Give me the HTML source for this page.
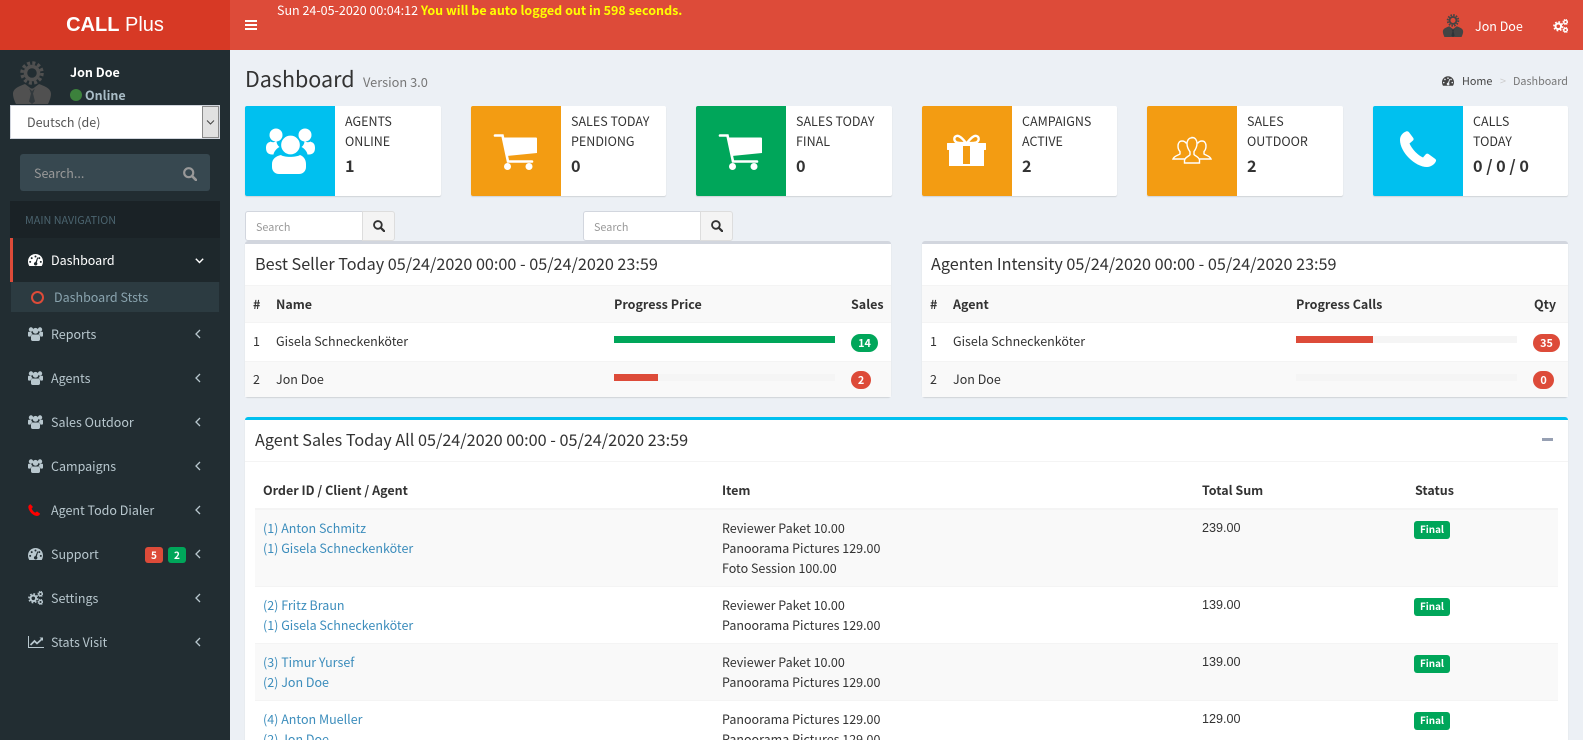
<!DOCTYPE html>
<html lang="en">
<head>
<meta charset="utf-8">
<title>CALL Plus | Dashboard</title>
<style>
*{box-sizing:border-box}
html,body{margin:0;padding:0;width:1583px;height:740px;overflow:hidden}
body{background:#ecf0f5}
#w{position:relative;width:1583px;height:740px;overflow:hidden;background:#ecf0f5;color:#333;font:12.5px/20px "Noto Sans CJK JP","Liberation Sans",sans-serif}
.a,.t{position:absolute}
.t{white-space:nowrap;line-height:20px}
svg{position:absolute;display:block;overflow:visible}
.nav{color:#b8c7ce}
.arabic{font-family:"Liberation Sans",sans-serif;font-size:12.6px}
.b{font-weight:700}
.box{position:absolute;background:#fff;border-radius:3px;box-shadow:0 1px 1px rgba(0,0,0,.12)}
.ib{position:absolute;top:106px;height:90px;background:#fff;border-radius:2px;box-shadow:0 1px 1px rgba(0,0,0,.12)}
.ic{position:absolute;left:0;top:0;width:90px;height:90px;border-radius:2px 0 0 2px}
.cy{background:#00c0ef}.or{background:#f39c12}.gr{background:#00a65a}.rd{background:#dd4b39}
.ib .t{left:100px;color:#333}
.ib .l1{top:5px}.ib .l2{top:25px}.ib .n{top:49px;font-size:16.2px;font-weight:700}
.inp{position:absolute;top:211px;height:30px;background:#fff;border:1px solid #d2d6de;border-radius:3px 0 0 3px;width:118px;font-size:10.8px;color:#999;padding:5px 10px 0;line-height:20px}
.btn{position:absolute;top:211px;height:30px;width:33px;background:#f4f4f4;border:1px solid #ddd;border-left:1px solid #ddd;border-radius:0 3px 3px 0}
.badge{position:absolute;color:#fff;font-size:10.8px;font-weight:700;line-height:18px;text-align:center;height:18px;border-radius:9px}
.final{position:absolute;left:1414px;width:36px;height:18px;background:#00a65a;color:#fff;font-size:9.9px;font-weight:700;line-height:16px;text-align:center;border-radius:3px}
.lk{color:#3c8dbc}
.track{position:absolute;height:7px;background:#f5f5f5}
.fill{position:absolute;left:0;top:0;height:7px}
.h3{font-size:16.2px}
</style>
</head>
<body>
<div id="w">
<svg width="0" height="0" style="position:absolute">
  <defs>
    <symbol id="users" viewBox="0 0 15 14">
      <circle cx="3" cy="2.500" r="2.200" fill="currentColor"/><circle cx="12" cy="2.500" r="2.200" fill="currentColor"/><circle cx="7.500" cy="3.800" r="2.900" fill="currentColor"/>
      <path fill="currentColor" d="M0 5.600c0-.6.5-.9 1-.9h2.200c.2 1 .7 1.800 1.400 2.400C3.400 7.500 2.700 8.400 2.600 9.600H1C.4 9.600 0 9.200 0 8.600zM15 5.600c0-.6-.5-.9-1-.9h-2.200c-.2 1-.7 1.800-1.400 2.400 1.200.4 1.900 1.300 2 2.500H14c.6 0 1-.4 1-1zM4.600 7.500h5.800c1.200 0 1.600 1.100 1.600 2.300v2.400c0 1-.6 1.800-1.700 1.800H4.700C3.600 14 3 13.200 3 12.200V9.800c0-1.200.4-2.300 1.600-2.300z"/>
    </symbol>
    <symbol id="gauge" viewBox="0 0 15 12">
      <path fill="currentColor" fill-rule="evenodd" d="M7.500 0C3.300 0 0 3.300 0 7.500c0 1.700.5 3.200 1.300 4.500h12.400c.8-1.300 1.300-2.800 1.300-4.500C15 3.300 11.700 0 7.500 0zM7.500 1.500a1 1 0 1 1 0 2 1 1 0 0 1 0-2zM3.700 3.100a1 1 0 1 1 0 2 1 1 0 0 1 0-2zM11.300 3.100a1 1 0 1 1 0 2 1 1 0 0 1 0-2zM2.200 6.900a1 1 0 1 1 0 2 1 1 0 0 1 0-2zM12.800 6.900a1 1 0 1 1 0 2 1 1 0 0 1 0-2zM9.300 3.400l.9.300-1.400 4.800c.4.300.6.800.6 1.300 0 1-.8 1.700-1.700 1.700S5.900 10.800 5.900 9.800c0-.9.700-1.600 1.600-1.700z"/>
    </symbol>
    <symbol id="cogs" viewBox="0 0 15 14">
      <g fill="none" stroke="currentColor">
        <circle cx="5.300" cy="7.300" r="2.800" stroke-width="2"/>
        <circle cx="5.300" cy="7.300" r="4.400" stroke-width="1.500" stroke-dasharray="1.700 1.750"/>
        <circle cx="12.500" cy="3" r="1.700" stroke-width="1.300"/>
        <circle cx="12.500" cy="3" r="2.600" stroke-width=".9" stroke-dasharray="1.100 .95"/>
        <circle cx="12.500" cy="11" r="1.700" stroke-width="1.300"/>
        <circle cx="12.500" cy="11" r="2.600" stroke-width=".9" stroke-dasharray="1.100 .95"/>
      </g>
    </symbol>
    <symbol id="search" viewBox="0 0 13 13">
      <circle cx="5.300" cy="5.300" r="4.200" fill="none" stroke="currentColor" stroke-width="2"/>
      <path d="M8.400 8.400L12 12" stroke="currentColor" stroke-width="2.400" stroke-linecap="round"/>
    </symbol>
    <symbol id="man" viewBox="0 0 40 43">
      <g fill="none" stroke="currentColor">
        <circle cx="20" cy="12" r="6.500" stroke-width="3.500"/>
        <circle cx="20" cy="12" r="10" stroke-width="3.500" stroke-dasharray="3 2.236"/>
      </g>
      <path fill="currentColor" d="M13 23C8 25 1 27 1 33c0 3 1.500 7 3 10h32c1.500-3 3-7 3-10 0-6-7-8-12-10l-6 4.500h-2z"/>
      <path fill="#222d32" d="M17.200 27.500l2.800 2.600 2.800-2.600-1.800 5 2 8-3 2.500-3-2.500 2-8z" opacity=".65"/>
    </symbol>
  </defs>
</svg>

<!-- HEADER -->
<div class="a" style="left:0;top:0;width:230px;height:50px;background:#d73925"></div>
<div class="t" style="left:0;top:10px;width:230px;text-align:center;font:20px/30px 'Liberation Sans',sans-serif;color:#fff"><b>CALL</b> Plus</div>
<div class="a" style="left:230px;top:0;width:1353px;height:50px;background:#dd4b39"></div>
<div class="a" style="left:245px;top:20px;width:12px;height:2px;background:#fff"></div>
<div class="a" style="left:245px;top:24px;width:12px;height:2px;background:#fff"></div>
<div class="a" style="left:245px;top:28px;width:12px;height:2px;background:#fff"></div>
<div class="t" style="left:277px;top:0;color:#fff">Sun 24-05-2020 00:04:12 <b style="color:#ff0">You will be auto logged out in 598 seconds.</b></div>
<svg style="left:1442px;top:14px;color:#444" width="22" height="23"><use href="#man"/></svg>
<div class="t" style="left:1475px;top:16px;color:#fff">Jon Doe</div>
<svg style="left:1553px;top:19px;color:#fff" width="15" height="14"><use href="#cogs"/></svg>

<!-- SIDEBAR -->
<div class="a" style="left:0;top:50px;width:230px;height:690px;background:#222d32"></div>
<svg style="left:12px;top:61px;color:#505050" width="40" height="43"><use href="#man"/></svg>
<div class="t b" style="left:70px;top:62px;color:#fff">Jon Doe</div>
<div class="a" style="left:70px;top:89px;width:12px;height:12px;border-radius:50%;background:#3c813c"></div>
<div class="t" style="left:85px;top:85px;color:#a9bcc6;font-weight:700">Online</div>
<div class="a" style="left:10px;top:105px;width:210px;height:34px;background:#fff;border:1px solid #d2d6de"></div>
<div class="t" style="left:27px;top:112px;color:#555">Deutsch (de)</div>
<div class="a" style="left:202px;top:106px;width:17px;height:32px;background:#e1e1e1;border:1px solid #8a8a8a"></div>
<svg style="left:206px;top:120px" width="9" height="5"><path d="M1 .5l3.500 3.500L8 .5" fill="none" stroke="#444" stroke-width="1"/></svg>

<div class="a" style="left:20px;top:154px;width:190px;height:37px;background:#374850;border-radius:3px"></div>
<div class="t" style="left:34px;top:163px;color:#999">Search...</div>
<svg style="left:183px;top:167px;color:#999" width="14" height="14"><use href="#search"/></svg>

<div class="a" style="left:10px;top:201px;width:210px;height:37px;background:#1a2226"></div>
<div class="t" style="left:25px;top:210px;font-size:10.8px;color:#4b646f">MAIN NAVIGATION</div>

<div class="a" style="left:10px;top:238px;width:210px;height:44px;background:#1e282c;border-left:3px solid #dd4b39"></div>
<svg style="left:28px;top:254px;color:#fff" width="15" height="12"><use href="#gauge"/></svg>
<div class="t" style="left:51px;top:250px;color:#fff">Dashboard</div>
<svg style="left:195px;top:258px" width="9" height="6"><path d="M.8.800l3.700 3.700L8.200.800" fill="none" stroke="#fff" stroke-width="1.400"/></svg>

<div class="a" style="left:11px;top:282px;width:208px;height:30px;background:#2c3b41"></div>
<div class="a" style="left:31px;top:291px;width:13px;height:13px;border:2px solid #dd4b39;border-radius:50%"></div>
<div class="t" style="left:54px;top:287px;color:#8aa4af">Dashboard Ststs</div>

<svg style="left:28px;top:327px;color:#b8c7ce" width="15" height="14"><use href="#users"/></svg>
<div class="t nav" style="left:51px;top:324px">Reports</div>
<svg style="left:28px;top:371px;color:#b8c7ce" width="15" height="14"><use href="#users"/></svg>
<div class="t nav" style="left:51px;top:368px">Agents</div>
<svg style="left:28px;top:415px;color:#b8c7ce" width="15" height="14"><use href="#users"/></svg>
<div class="t nav" style="left:51px;top:412px">Sales Outdoor</div>
<svg style="left:28px;top:459px;color:#b8c7ce" width="15" height="14"><use href="#users"/></svg>
<div class="t nav" style="left:51px;top:456px">Campaigns</div>
<svg style="left:28px;top:504px" width="12" height="12" viewBox="0 0 36 36"><path fill="#f00" d="M8 1C5 1 1 4 1 9c0 11 14 27 26 27 5 0 9-4 9-7l-9-7-5 4c-5-2-10-8-11-13l4-4z"/></svg>
<div class="t nav" style="left:51px;top:500px">Agent Todo Dialer</div>
<svg style="left:28px;top:548px;color:#b8c7ce" width="15" height="12"><use href="#gauge"/></svg>
<div class="t nav" style="left:51px;top:544px">Support</div>
<div class="a rd" style="left:145px;top:547px;width:18px;height:16px;border-radius:3px;color:#fff;font:700 10px/16px 'Noto Sans CJK JP',sans-serif;text-align:center">5</div>
<div class="a gr" style="left:168px;top:547px;width:18px;height:16px;border-radius:3px;color:#fff;font:700 10px/16px 'Noto Sans CJK JP',sans-serif;text-align:center">2</div>
<svg style="left:28px;top:591px;color:#b8c7ce" width="15" height="14"><use href="#cogs"/></svg>
<div class="t nav" style="left:51px;top:588px">Settings</div>
<svg style="left:28px;top:636px" width="16" height="12"><path d="M.500 0v11.500H16" fill="none" stroke="#b8c7ce"/><path d="M2.500 9L6.500 5l2.500 2.500L14 3" fill="none" stroke="#b8c7ce" stroke-width="1.700"/><path d="M11.500 1.500H15V5z" fill="#b8c7ce"/></svg>
<div class="t nav" style="left:51px;top:632px">Stats Visit</div>

<svg style="left:195px;top:329px" width="6" height="10"><path d="M5 1L1 5l4 4" fill="none" stroke="#b8c7ce" stroke-width="1.300"/></svg>
<svg style="left:195px;top:373px" width="6" height="10"><path d="M5 1L1 5l4 4" fill="none" stroke="#b8c7ce" stroke-width="1.300"/></svg>
<svg style="left:195px;top:417px" width="6" height="10"><path d="M5 1L1 5l4 4" fill="none" stroke="#b8c7ce" stroke-width="1.300"/></svg>
<svg style="left:195px;top:461px" width="6" height="10"><path d="M5 1L1 5l4 4" fill="none" stroke="#b8c7ce" stroke-width="1.300"/></svg>
<svg style="left:195px;top:505px" width="6" height="10"><path d="M5 1L1 5l4 4" fill="none" stroke="#b8c7ce" stroke-width="1.300"/></svg>
<svg style="left:195px;top:549px" width="6" height="10"><path d="M5 1L1 5l4 4" fill="none" stroke="#b8c7ce" stroke-width="1.300"/></svg>
<svg style="left:195px;top:593px" width="6" height="10"><path d="M5 1L1 5l4 4" fill="none" stroke="#b8c7ce" stroke-width="1.300"/></svg>
<svg style="left:195px;top:637px" width="6" height="10"><path d="M5 1L1 5l4 4" fill="none" stroke="#b8c7ce" stroke-width="1.300"/></svg>

<!-- CONTENT HEADER -->
<div class="t" style="left:245px;top:64px;font-size:21.5px;line-height:30px">Dashboard</div>
<div class="t" style="left:363px;top:72px;font-size:12.8px;color:#777">Version 3.0</div>
<svg style="left:1442px;top:76px;color:#444" width="12" height="10"><use href="#gauge"/></svg>
<div class="t" style="left:1462px;top:71px;font-size:10.8px;color:#444">Home</div>
<div class="t" style="left:1500px;top:71px;font-size:10.8px;color:#ccc">&gt;</div>
<div class="t" style="left:1513px;top:71px;font-size:10.8px;color:#777">Dashboard</div>

<!-- INFO BOXES -->
<div class="ib" style="left:245px;width:196px">
  <div class="ic cy"><svg style="left:21px;top:22px;color:#fff" width="49" height="46" viewBox="0 0 49 46">
    <circle cx="10" cy="7" r="6.500" fill="#fff"/><circle cx="39" cy="7" r="6.500" fill="#fff"/>
    <path fill="#fff" d="M4 14c-3 .5-4 3-4 6 0 4 2 6.500 6 6.500h1.500c.5-3 3-6 6-7.500-2-1.500-3-4-3-6-2 1.500-4 1.500-6.500.5zM45 14c3 .5 4 3 4 6 0 4-2 6.500-6 6.500h-1.500c-.5-3-3-6-6-7.500 2-1.500 3-4 3-6 2 1.500 4 1.500 6.500.5z"/>
    <path fill="#fff" d="M15 27c3 2.500 15 2.500 19 0 3 1 6 4 6 9v3c0 4-3 7-7 7H13c-4 0-7-3-7-7v-3c0-5 4-8 9-9z"/>
    <circle cx="24.500" cy="17" r="10" fill="#fff" stroke="#00c0ef" stroke-width="1.300"/>
    </svg></div>
  <div class="t l1">AGENTS</div><div class="t l2">ONLINE</div><div class="t n">1</div>
</div>
<div class="ib" style="left:471px;width:195px">
  <div class="ic or"><svg style="left:23px;top:28px" width="44" height="37" viewBox="0 0 44 37"><path d="M1 1.500h7.500L14 27.500h24" fill="none" stroke="#fff" stroke-width="2.600" stroke-linecap="round"/><path fill="#fff" d="M9.500 3.500H42a1 1 0 0 1 1 1V19l-30 3z"/><circle cx="13.500" cy="32.500" r="3.500" fill="#fff"/><circle cx="35" cy="32.500" r="3.500" fill="#fff"/></svg></div>
  <div class="t l1">SALES TODAY</div><div class="t l2">PENDIONG</div><div class="t n">0</div>
</div>
<div class="ib" style="left:696px;width:196px">
  <div class="ic gr"><svg style="left:23px;top:28px" width="44" height="37" viewBox="0 0 44 37"><path d="M1 1.500h7.500L14 27.500h24" fill="none" stroke="#fff" stroke-width="2.600" stroke-linecap="round"/><path fill="#fff" d="M9.500 3.500H42a1 1 0 0 1 1 1V19l-30 3z"/><circle cx="13.500" cy="32.500" r="3.500" fill="#fff"/><circle cx="35" cy="32.500" r="3.500" fill="#fff"/></svg></div>
  <div class="t l1">SALES TODAY</div><div class="t l2">FINAL</div><div class="t n">0</div>
</div>
<div class="ib" style="left:922px;width:195px">
  <div class="ic or"><svg style="left:24px;top:28px" width="41" height="33" viewBox="0 0 41 33"><path d="M20 9C17 5 13 1 10.500 2c-3 1-3 5 .5 6.500 3 1 6 .5 9 .5zM21 9c3-4 7-8 9.500-7 3 1 3 5-.5 6.500-3 1-6 .5-9 .5z" fill="none" stroke="#fff" stroke-width="2.400"/><rect x="1" y="9" width="39" height="7" rx=".5" fill="#fff"/><rect x="3" y="15" width="35" height="17" fill="#fff"/><rect x="17" y="12" width="7" height="18" fill="#f39c12"/></svg></div>
  <div class="t l1">CAMPAIGNS</div><div class="t l2">ACTIVE</div><div class="t n">2</div>
</div>
<div class="ib" style="left:1147px;width:196px">
  <div class="ic or"><svg style="left:25px;top:31px" width="40" height="27" viewBox="0 0 40 27" fill="none" stroke="#fff" stroke-width="1.400"><path d="M20 .8c-3.500 0-5 3-5 6 0 3.500 1.500 6 3 8v3c-2 2-5 2.500-5.500 5.500V26h15v-3c-.5-3-3.500-3.500-5.500-5.500v-3c1.500-2 3-4.500 3-8 0-3-1.500-6-5-6z"/><path d="M14.500 6.500c-1-1.500-2-2.500-4.500-2.500s-4 2-4 5c0 2.500 1 4.500 2 5.500v2.500c-2 1.500-6 2-7 5h11.500"/><path d="M25.500 6.500c1-1.500 2-2.500 4.500-2.500s4 2 4 5c0 2.500-1 4.500-2 5.500v2.500c2 1.500 6 2 7 5H27.500"/></svg></div>
  <div class="t l1">SALES</div><div class="t l2">OUTDOOR</div><div class="t n">2</div>
</div>
<div class="ib" style="left:1373px;width:195px">
  <div class="ic cy"><svg style="left:27px;top:25px" width="36" height="36" viewBox="0 0 36 36"><path fill="#fff" d="M6 .5C3 1.500 0 4.500 0 9c0 12 15 27 27 27 4 0 8-3 9-6 .3-1-.2-1.500-1-2.200L28.500 23c-1-.7-2-.5-2.700.3L23 26.500c-5-2-11-8.500-13.500-14l3.500-3c.7-.7.800-1.500.3-2.500L9 1.300C8.300.3 7.200 0 6 .5z"/></svg></div>
  <div class="t l1">CALLS</div><div class="t l2">TODAY</div><div class="t n">0 / 0 / 0</div>
</div>

<!-- SEARCH INPUTS -->
<div class="inp" style="left:245px">Search</div>
<div class="btn" style="left:362px"><svg style="left:10px;top:8px;color:#333" width="12" height="12"><use href="#search"/></svg></div>
<div class="inp" style="left:583px">Search</div>
<div class="btn" style="left:700px"><svg style="left:10px;top:8px;color:#333" width="12" height="12"><use href="#search"/></svg></div>

<!-- BEST SELLER -->
<div class="box" style="left:245px;top:241px;width:646px;height:156px;border-top:3px solid #d2d6de"></div>
<div class="t h3" style="left:255px;top:253px">Best Seller Today 05/24/2020 00:00 - 05/24/2020 23:59</div>
<div class="a" style="left:245px;top:285px;width:646px;height:38px;background:#f9f9f9;border-top:1px solid #f4f4f4;border-bottom:1px solid #f4f4f4"></div>
<div class="a" style="left:245px;top:361px;width:646px;height:36px;background:#f9f9f9;border-top:1px solid #f4f4f4"></div>
<div class="t b" style="left:253px;top:294px">#</div>
<div class="t b" style="left:276px;top:294px">Name</div>
<div class="t b" style="left:614px;top:294px">Progress Price</div>
<div class="t b" style="left:851px;top:294px">Sales</div>
<div class="t" style="left:253px;top:331px">1</div>
<div class="t" style="left:276px;top:331px">Gisela Schneckenköter</div>
<div class="track" style="left:614px;top:336px;width:221px"><div class="fill gr" style="width:221px"></div></div>
<div class="badge gr" style="left:851px;top:334px;width:27px">14</div>
<div class="t" style="left:253px;top:369px">2</div>
<div class="t" style="left:276px;top:369px">Jon Doe</div>
<div class="track" style="left:614px;top:374px;width:221px"><div class="fill rd" style="width:44px"></div></div>
<div class="badge rd" style="left:851px;top:371px;width:20px">2</div>

<!-- AGENTEN INTENSITY -->
<div class="box" style="left:922px;top:241px;width:646px;height:156px;border-top:3px solid #d2d6de"></div>
<div class="t h3" style="left:931px;top:253px">Agenten Intensity 05/24/2020 00:00 - 05/24/2020 23:59</div>
<div class="a" style="left:922px;top:285px;width:646px;height:38px;background:#f9f9f9;border-top:1px solid #f4f4f4;border-bottom:1px solid #f4f4f4"></div>
<div class="a" style="left:922px;top:361px;width:646px;height:36px;background:#f9f9f9;border-top:1px solid #f4f4f4"></div>
<div class="t b" style="left:930px;top:294px">#</div>
<div class="t b" style="left:953px;top:294px">Agent</div>
<div class="t b" style="left:1296px;top:294px">Progress Calls</div>
<div class="t b" style="left:1534px;top:294px">Qty</div>
<div class="t" style="left:930px;top:331px">1</div>
<div class="t" style="left:953px;top:331px">Gisela Schneckenköter</div>
<div class="track" style="left:1296px;top:336px;width:221px"><div class="fill rd" style="width:77px"></div></div>
<div class="badge rd" style="left:1533px;top:334px;width:27px">35</div>
<div class="t" style="left:930px;top:369px">2</div>
<div class="t" style="left:953px;top:369px">Jon Doe</div>
<div class="track" style="left:1296px;top:374px;width:221px"></div>
<div class="badge rd" style="left:1533px;top:371px;width:21px">0</div>

<!-- AGENT SALES -->
<div class="box" style="left:245px;top:417px;width:1323px;height:340px;border-top:3px solid #00c0ef"></div>
<div class="t h3" style="left:255px;top:429px">Agent Sales Today All 05/24/2020 00:00 - 05/24/2020 23:59</div>
<div class="a" style="left:1542px;top:438px;width:11px;height:3px;background:#97a0b3"></div>
<div class="a" style="left:245px;top:461px;width:1323px;height:1px;background:#f4f4f4"></div>

<div class="t b" style="left:263px;top:480px">Order ID / Client / Agent</div>
<div class="t b" style="left:722px;top:480px">Item</div>
<div class="t b" style="left:1202px;top:480px">Total Sum</div>
<div class="t b" style="left:1415px;top:480px">Status</div>
<div class="a" style="left:255px;top:508px;width:1303px;height:2px;background:#f4f4f4"></div>

<div class="a" style="left:255px;top:510px;width:1303px;height:77px;background:#f9f9f9;border-bottom:1px solid #f4f4f4"></div>
<div class="t lk" style="left:263px;top:518px">(1) Anton Schmitz</div>
<div class="t lk" style="left:263px;top:538px">(1) Gisela Schneckenköter</div>
<div class="t" style="left:722px;top:518px">Reviewer Paket 10.00</div>
<div class="t" style="left:722px;top:538px">Panoorama Pictures 129.00</div>
<div class="t" style="left:722px;top:558px">Foto Session 100.00</div>
<div class="t arabic" style="left:1202px;top:518px">239.00</div>
<div class="final" style="top:521px">Final</div>

<div class="a" style="left:255px;top:643px;width:1303px;height:1px;background:#f4f4f4"></div>
<div class="t lk" style="left:263px;top:595px">(2) Fritz Braun</div>
<div class="t lk" style="left:263px;top:615px">(1) Gisela Schneckenköter</div>
<div class="t" style="left:722px;top:595px">Reviewer Paket 10.00</div>
<div class="t" style="left:722px;top:615px">Panoorama Pictures 129.00</div>
<div class="t arabic" style="left:1202px;top:595px">139.00</div>
<div class="final" style="top:598px">Final</div>

<div class="a" style="left:255px;top:644px;width:1303px;height:57px;background:#f9f9f9;border-bottom:1px solid #f4f4f4"></div>
<div class="t lk" style="left:263px;top:652px">(3) Timur Yursef</div>
<div class="t lk" style="left:263px;top:672px">(2) Jon Doe</div>
<div class="t" style="left:722px;top:652px">Reviewer Paket 10.00</div>
<div class="t" style="left:722px;top:672px">Panoorama Pictures 129.00</div>
<div class="t arabic" style="left:1202px;top:652px">139.00</div>
<div class="final" style="top:655px">Final</div>

<div class="t lk" style="left:263px;top:709px">(4) Anton Mueller</div>
<div class="t lk" style="left:263px;top:729px">(2) Jon Doe</div>
<div class="t" style="left:722px;top:709px">Panoorama Pictures 129.00</div>
<div class="t" style="left:722px;top:729px">Panoorama Pictures 129.00</div>
<div class="t arabic" style="left:1202px;top:709px">129.00</div>
<div class="final" style="top:712px">Final</div>
</div>
</body>
</html>
